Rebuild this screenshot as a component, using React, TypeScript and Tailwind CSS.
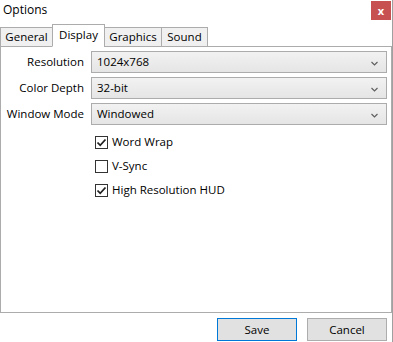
import React, { useState } from 'react';

const TABS = [
  { name: 'General', w: 'w-[53px]' },
  { name: 'Display', w: 'w-[53px]' },
  { name: 'Graphics', w: 'w-[58px]' },
  { name: 'Sound', w: 'w-[47px]' },
];

const SELECTS = [
  { label: 'Resolution', value: '1024x768' },
  { label: 'Color Depth', value: '32-bit' },
  { label: 'Window Mode', value: 'Windowed' },
];

const Chevron = () => (
  <svg width="7" height="5" viewBox="0 0 7 5" className="absolute right-[8px] top-[9px]">
    <path d="M0.5 1 L3.5 4 L6.5 1" fill="none" stroke="#606060" strokeWidth="1.2" />
  </svg>
);

const Check = ({ checked, label, onToggle }: { checked: boolean; label: string; onToggle: () => void }) => (
  <div className="flex items-center h-[24px] cursor-default" onClick={onToggle}>
    <div className="w-[13px] h-[13px] border border-[#333333] bg-white flex items-center justify-center">
      {checked && (
        <svg width="11" height="11" viewBox="0 0 11 11">
          <path d="M1.5 5.5 L4.2 8.3 L9.5 2.5" fill="none" stroke="#202020" strokeWidth="1.8" />
        </svg>
      )}
    </div>
    <span className="ml-[4px]">{label}</span>
  </div>
);

export default function App() {
  const [checks, setChecks] = useState([true, false, true]);
  const labels = ['Word Wrap', 'V-Sync', 'High Resolution HUD'];

  return (
    <div className="relative w-[393px] h-[342px] bg-white text-[11.5px] text-black overflow-hidden font-['Open_Sans','Noto_Sans',sans-serif]">
      {/* window right frame */}
      <div className="absolute right-0 top-0 bottom-0 w-px bg-[#a0a0a0]" />

      {/* Title bar */}
      <div className="flex items-start h-[22px]">
        <span className="ml-[3px] mt-[2px] leading-[16px] text-[12px]">Options</span>
        <div className="ml-auto mr-[2px] mt-[1px] w-[20px] h-[19px] bg-[#c75050] flex items-center justify-center text-white text-[11px] font-bold leading-none">
          x
        </div>
      </div>

      {/* Tabs */}
      <div className="flex items-end h-[25px] relative z-10 -mb-px">
        {TABS.map((t, i) => {
          const selected = t.name === 'Display';
          return (
            <div
              key={t.name}
              className={`${t.w} text-center border border-[#acacac] leading-[17px] ${
                selected ? 'bg-white h-[23px] border-b-white pt-[1px]' : 'bg-[#f0f0f0] h-[20px]'
              } ${i > 0 ? '-ml-px' : ''}`}
            >
              {t.name}
            </div>
          );
        })}
      </div>

      {/* Panel */}
      <div className="w-[392px] h-[267px] border border-[#acacac] pt-[4px]">
        <div className="flex flex-col gap-[4px]">
          {SELECTS.map((s) => (
            <div key={s.label} className="flex items-center h-[22px]">
              <div className="w-[84px] text-right pr-[1px]">{s.label}</div>
              <div className="relative ml-[6px] w-[296px] h-[22px] border border-[#acacac] bg-gradient-to-b from-[#f2f2f2] to-[#e5e5e5] pl-[5px] leading-[20px]">
                {s.value}
                <Chevron />
              </div>
            </div>
          ))}
        </div>
        <div className="ml-[94px] mt-[5px] flex flex-col">
          {labels.map((l, i) => (
            <Check
              key={l}
              label={l}
              checked={checks[i]}
              onToggle={() => setChecks(checks.map((c, j) => (j === i ? !c : c)))}
            />
          ))}
        </div>
      </div>

      {/* Footer */}
      <div className="flex justify-end gap-[10px] pr-[6px] pt-[5px]">
        <button className="w-[80px] h-[23px] border border-[#0078d7] bg-[#e1e1e1] leading-[20px]">Save</button>
        <button className="w-[80px] h-[23px] border border-[#adadad] bg-[#e1e1e1] leading-[20px]">Cancel</button>
      </div>
    </div>
  );
}
